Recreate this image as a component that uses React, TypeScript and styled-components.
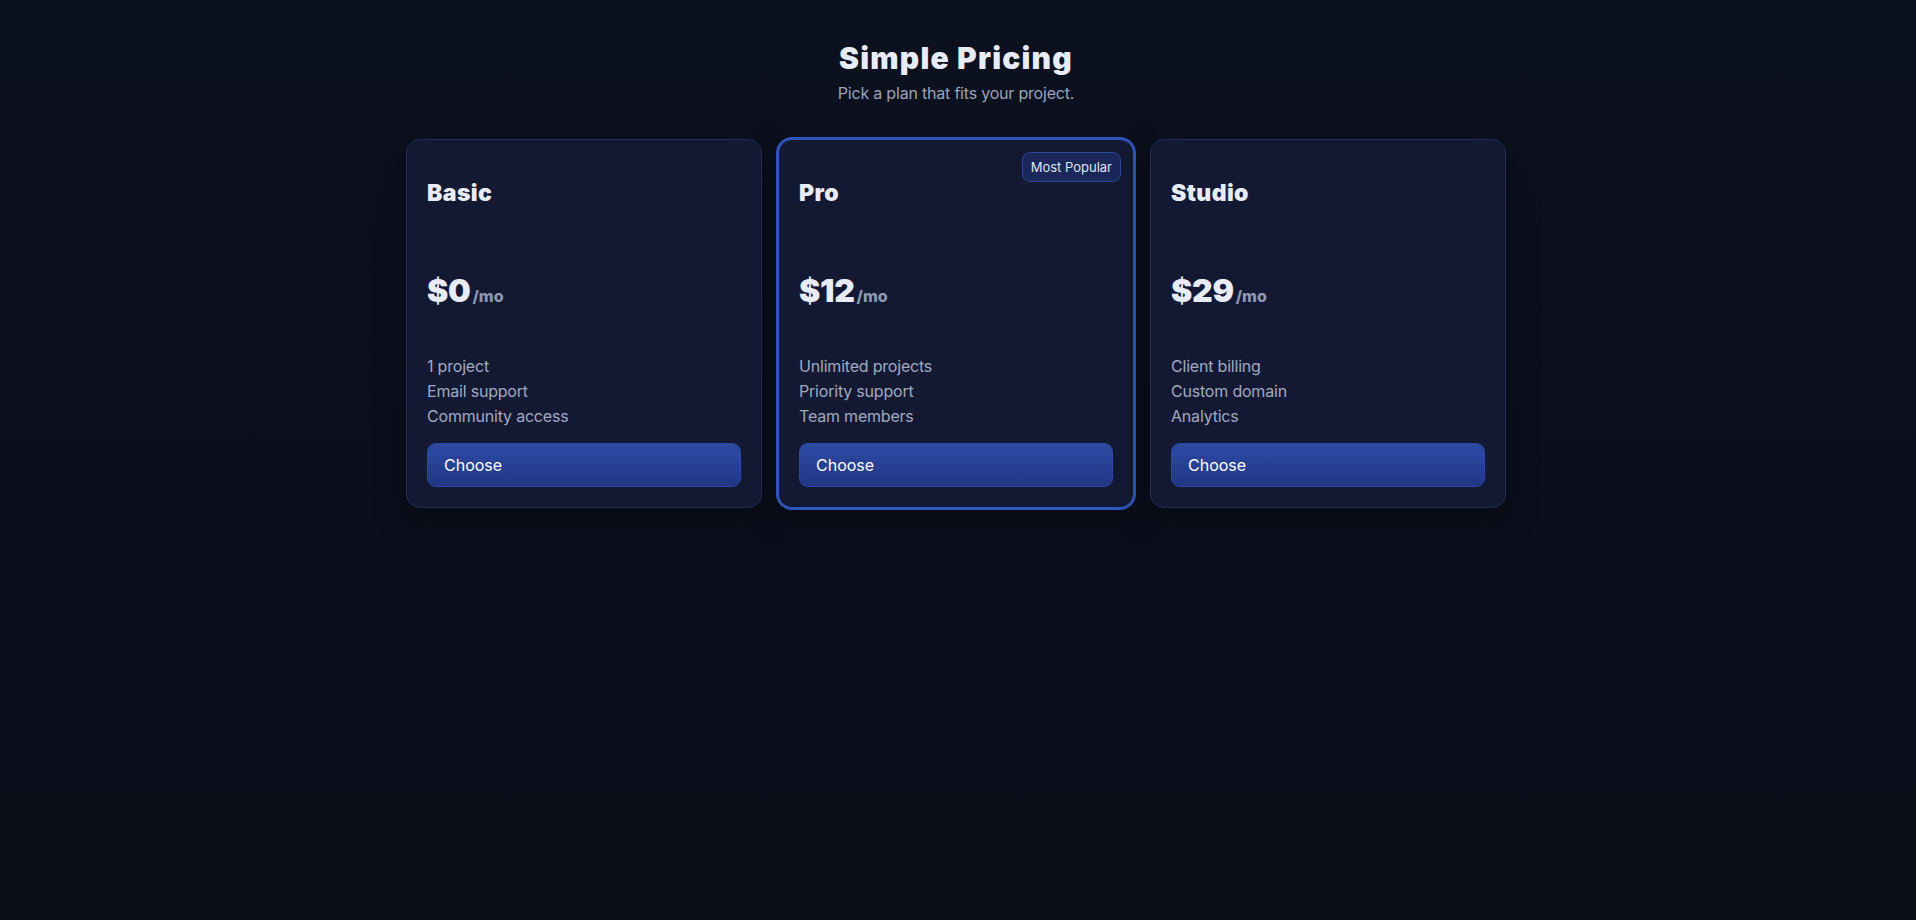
import React from "react";
import styled, { createGlobalStyle } from "styled-components";

const GlobalStyle = createGlobalStyle`
  * { box-sizing: border-box; }
  html, body { margin: 0; padding: 0; }
  body {
    background: #0a0e1a;
    font-family: Inter, "Noto Sans", "Liberation Sans", sans-serif;
    color: #e6eaf6;
    min-height: 920px;
  }
`;

const Page = styled.main`
  min-height: 920px;
  background: linear-gradient(180deg, #0c1120 0%, #0a0e19 100%);
  display: flex;
  flex-direction: column;
  align-items: center;
  padding: 41px 4px 0 0;
`;

const Title = styled.h1`
  margin: 0;
  font-size: 30px;
  line-height: 34.8px;
  font-weight: 900;
  color: #e8ecf8;
  letter-spacing: 1.2px;
`;

const Subtitle = styled.p`
  margin: 5px 0 0;
  font-size: 16px;
  line-height: 24px;
  color: #9aa3ba;
  letter-spacing: -0.2px;
`;

const Grid = styled.section`
  margin-top: 34px;
  display: grid;
  grid-template-columns: repeat(3, 356px);
  gap: 16px;
`;

const Card = styled.article<{ $featured?: boolean }>`
  position: relative;
  display: flex;
  flex-direction: column;
  padding: 20px;
  border-radius: 14px;
  background: #131933;
  border: 1px solid ${(p) => (p.$featured ? "#2f55b8" : "#232c55")};
  box-shadow: ${(p) =>
    p.$featured
      ? "0 0 0 2px #2f55b8, 0 12px 32px rgba(0, 0, 0, 0.35)"
      : "0 12px 32px rgba(0, 0, 0, 0.35)"};
`;

const Badge = styled.span`
  position: absolute;
  top: 12px;
  right: 12px;
  height: 30px;
  padding: 0 8px;
  display: flex;
  align-items: center;
  border-radius: 8px;
  background: #1b275a;
  border: 1px solid #2d4595;
  color: #dfe5f5;
  font-size: 13px;
  font-weight: 400;
`;

const PlanName = styled.h2`
  margin: 19px 0 0;
  font-size: 23px;
  line-height: 28px;
  font-weight: 900;
  color: #e8ecf8;
  letter-spacing: 0.4px;
`;

const Price = styled.div`
  margin-top: 68px;
  display: flex;
  align-items: baseline;
  font-size: 32px;
  line-height: 32px;
  font-weight: 900;
  color: #e8ecf8;
  letter-spacing: -0.3px;
`;

const Period = styled.span`
  font-size: 16px;
  font-weight: 800;
  color: #8e97b2;
  margin-left: 2px;
  letter-spacing: 0;
`;

const Features = styled.ul`
  margin: 42px 0 0;
  padding: 0;
  list-style: none;
`;

const Feature = styled.li`
  font-size: 16px;
  line-height: 25px;
  color: #a1a9c0;
  letter-spacing: -0.2px;
`;

const ChooseButton = styled.button`
  margin-top: 14.5px;
  height: 44px;
  width: 100%;
  padding: 0 16px;
  display: flex;
  align-items: center;
  border-radius: 9px;
  border: 1px solid #2e4aa2;
  background: linear-gradient(180deg, #2c4aa4 0%, #213684 100%);
  color: #ffffff;
  font-family: inherit;
  font-size: 16px;
  font-weight: 400;
  cursor: pointer;
`;

const plans = [
  { name: "Basic", price: "$0", features: ["1 project", "Email support", "Community access"] },
  {
    name: "Pro",
    price: "$12",
    featured: true,
    features: ["Unlimited projects", "Priority support", "Team members"],
  },
  { name: "Studio", price: "$29", features: ["Client billing", "Custom domain", "Analytics"] },
];

export default function App() {
  return (
    <>
      <GlobalStyle />
      <Page>
        <Title>Simple Pricing</Title>
        <Subtitle>Pick a plan that fits your project.</Subtitle>
        <Grid>
          {plans.map((plan) => (
            <Card key={plan.name} $featured={plan.featured}>
              {plan.featured && <Badge>Most Popular</Badge>}
              <PlanName>{plan.name}</PlanName>
              <Price>
                {plan.price}
                <Period>/mo</Period>
              </Price>
              <Features>
                {plan.features.map((f) => (
                  <Feature key={f}>{f}</Feature>
                ))}
              </Features>
              <ChooseButton>Choose</ChooseButton>
            </Card>
          ))}
        </Grid>
      </Page>
    </>
  );
}
